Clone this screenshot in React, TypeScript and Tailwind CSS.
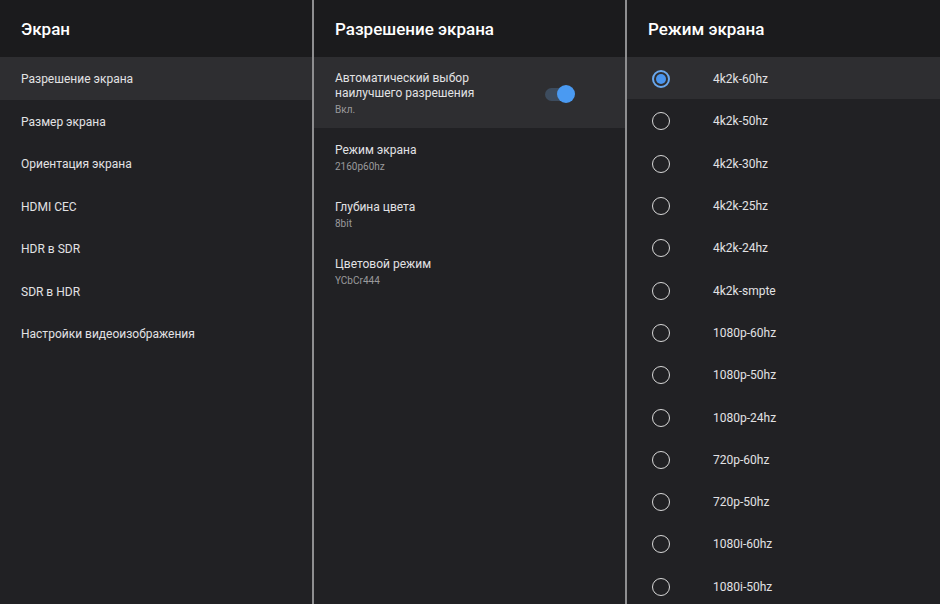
import React from 'react';

const leftItems = [
  'Разрешение экрана',
  'Размер экрана',
  'Ориентация экрана',
  'HDMI CEC',
  'HDR в SDR',
  'SDR в HDR',
  'Настройки видеоизображения',
];

const midItems = [
  { title: 'Режим экрана', sub: '2160p60hz' },
  { title: 'Глубина цвета', sub: '8bit' },
  { title: 'Цветовой режим', sub: 'YCbCr444' },
];

const modes = [
  '4k2k-60hz', '4k2k-50hz', '4k2k-30hz', '4k2k-25hz', '4k2k-24hz', '4k2k-smpte',
  '1080p-60hz', '1080p-50hz', '1080p-24hz', '720p-60hz', '720p-50hz', '1080i-60hz', '1080i-50hz',
];

const Header: React.FC<{ title: string }> = ({ title }) => (
  <div className="h-[57px] shrink-0 bg-[#1b1b1d] flex items-center px-[21px] pt-[3px]">
    <h1 className="text-[17px] font-medium text-white">{title}</h1>
  </div>
);

const Radio: React.FC<{ checked?: boolean }> = ({ checked }) =>
  checked ? (
    <div className="w-[18px] h-[18px] rounded-full border-2 border-[#6aa8ee] flex items-center justify-center">
      <div className="w-[10px] h-[10px] rounded-full bg-[#4a95ee]" />
    </div>
  ) : (
    <div className="w-[18px] h-[18px] rounded-full border-[1.5px] border-[#d8d8d8]" />
  );

export default function App() {
  return (
    <div
      className="w-[940px] h-[604px] overflow-hidden flex bg-[#212124] text-[#e2e2e4]"
      style={{ fontFamily: 'Roboto, "Noto Sans", sans-serif' }}
    >
      {/* Column 1 */}
      <div className="w-[312px] shrink-0 flex flex-col">
        <Header title="Экран" />
        {leftItems.map((t, i) => (
          <div
            key={t}
            className={`h-[42.5px] shrink-0 flex items-center px-[21px] pt-[2px] text-[12px] ${i === 0 ? 'bg-[#2e2e31]' : ''}`}
          >
            {t}
          </div>
        ))}
      </div>
      <div className="w-[2px] shrink-0 bg-[#8e8e90]" />

      {/* Column 2 */}
      <div className="w-[311px] shrink-0 flex flex-col">
        <Header title="Разрешение экрана" />
        <div className="h-[71px] shrink-0 bg-[#2e2e31] flex items-center pl-[21px] pr-[50px] pt-[3px]">
          <div className="flex-1 flex flex-col">
            <div className="text-[12px] leading-[15px]">Автоматический выбор</div>
            <div className="text-[12px] leading-[15px]">наилучшего разрешения</div>
            <div className="text-[10px] leading-[14px] text-[#9a9a9c] mt-[2px]">Вкл.</div>
          </div>
          <div className="relative w-[30px] h-[20px] flex items-center">
            <div className="w-[26px] h-[13px] rounded-full bg-[#3d4c5e]" />
            <div className="absolute right-0 w-[18px] h-[18px] rounded-full bg-[#4a9af2]" />
          </div>
        </div>
        {midItems.map(it => (
          <div key={it.title} className="h-[57px] shrink-0 flex flex-col px-[21px] pt-[14px]">
            <div className="text-[12px] leading-[16px]">{it.title}</div>
            <div className="text-[10px] leading-[14px] text-[#9a9a9c] mt-[2px]">{it.sub}</div>
          </div>
        ))}
      </div>
      <div className="w-[2px] shrink-0 bg-[#8e8e90]" />

      {/* Column 3 */}
      <div className="flex-1 flex flex-col">
        <Header title="Режим экрана" />
        {modes.map((m, i) => (
          <div
            key={m}
            className={`h-[42.3px] shrink-0 flex items-center pl-[25px] pt-[2px] text-[12px] ${i === 0 ? 'bg-[#2e2e31]' : ''}`}
          >
            <Radio checked={i === 0} />
            <span className="ml-[43px]">{m}</span>
          </div>
        ))}
      </div>
    </div>
  );
}
